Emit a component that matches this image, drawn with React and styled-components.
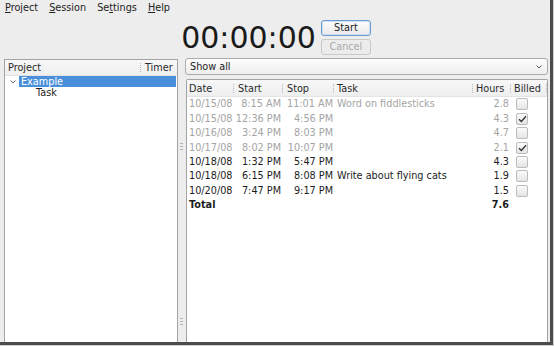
import React from 'react';
import styled, { createGlobalStyle } from 'styled-components';

const Global = createGlobalStyle`
  html, body { margin: 0; padding: 0; background: #d2d2d2; }
  body {
    font-family: "DejaVu Sans", "Liberation Sans", sans-serif;
    font-size: 9.7px;
    color: #1c1c1c;
  }
`;

const Window = styled.div`
  width: 550px;
  height: 342px;
  background: #ededed;
  border-right: 3px solid #4c4c4c;
  border-bottom: 3px solid #4c4c4c;
  display: flex;
  flex-direction: column;
  overflow: hidden;
`;

const MenuBar = styled.div`
  height: 16px;
  display: flex;
  align-items: center;
  padding-left: 5px;
  gap: 11px;
`;

const MenuItem = styled.span`
  line-height: 16px;
  color: #222;
  u { text-decoration: underline; text-underline-offset: 1px; }
`;

const TimerRow = styled.div`
  height: 42px;
  display: flex;
  justify-content: center;
  align-items: center;
  gap: 5px;
  padding-left: 2px;
`;

const TimerText = styled.div`
  font-size: 30px;
  line-height: 34px;
  color: #1a1a1a;
  padding-top: 1px;
`;

const ButtonStack = styled.div`
  display: flex;
  flex-direction: column;
  gap: 3px;
`;

const Button = styled.button`
  width: 50px;
  height: 16px;
  padding: 0;
  font-family: inherit;
  font-size: 9.7px;
  line-height: 14px;
  border-radius: 3px;
  border: 1px solid ${p => (p.$primary ? '#6b9bd3' : '#c9c9c9')};
  background: ${p => (p.disabled ? '#ececec' : 'linear-gradient(#fdfdfd, #e9e9e9)')};
  color: ${p => (p.disabled ? '#a9a9a9' : '#1c1c1c')};
  box-shadow: ${p => (p.$primary ? 'inset 0 0 0 1px #cfe0f4' : 'none')};
`;

const Main = styled.div`
  flex: 1;
  display: flex;
  padding-left: 4px;
  padding-right: 2px;
  min-height: 0;
`;

const LeftPanel = styled.div`
  width: 172px;
  margin-top: 1px;
  border: 1px solid #a3a3a3;
  border-bottom: none;
  background: #fff;
  display: flex;
  flex-direction: column;
`;

const PanelHeader = styled.div`
  height: 15px;
  display: flex;
  align-items: center;
  background: linear-gradient(#f8f8f8, #efefef);
  border-bottom: 1px solid #e2e2e2;
`;

const HeadCell = styled.div`
  height: 100%;
  display: flex;
  align-items: center;
  padding-left: ${p => p.$pad ?? 4}px;
  flex: ${p => (p.$grow ? 1 : 'none')};
  width: ${p => (p.$w ? `${p.$w}px` : 'auto')};
  box-sizing: border-box;
  color: #2a2a2a;
`;

const Grip = styled.span`
  width: 1px;
  height: 9px;
  background: repeating-linear-gradient(#b8b8b8 0 1px, transparent 1px 2px);
  align-self: center;
  flex: none;
`;

const TreeRow = styled.div`
  height: 11px;
  display: flex;
  align-items: center;
  padding-left: ${p => p.$indent}px;
`;

const Expander = styled.span`
  width: 9px;
  display: flex;
  align-items: center;
`;

const TreeLabel = styled.span`
  flex: ${p => (p.$selected ? 1 : 'none')};
  height: 11px;
  line-height: 11px;
  padding-left: 2px;
  margin-right: 1px;
  background: ${p => (p.$selected ? '#4a8fda' : 'transparent')};
  color: ${p => (p.$selected ? '#fff' : '#1c1c1c')};
`;

const Splitter = styled.div`
  width: 7px;
  display: flex;
  flex-direction: column;
  align-items: center;
  justify-content: space-between;
  padding: 85px 0 16px;
  box-sizing: border-box;
`;

const SplitGrip = styled.span`
  width: 3px;
  height: 8px;
  background: repeating-linear-gradient(#b4b4b4 0 1px, transparent 1px 3px);
`;

const RightPanel = styled.div`
  flex: 1;
  display: flex;
  flex-direction: column;
  gap: 4px;
  min-width: 0;
`;

const Combo = styled.div`
  height: 17px;
  box-sizing: border-box;
  border: 1px solid #ababab;
  border-radius: 3px;
  background: linear-gradient(#fdfdfd, #eeeeee);
  display: flex;
  align-items: center;
  justify-content: space-between;
  padding: 0 5px 0 4px;
  color: #222;
`;

const Table = styled.div`
  flex: 1;
  margin-left: 1px;
  border: 1px solid #a3a3a3;
  border-bottom: none;
  border-radius: 2px 2px 0 0;
  background: #fff;
  display: flex;
  flex-direction: column;
`;

const Cols = '46px 49px 51px 139px 38px 1fr';

const TableHead = styled.div`
  height: 16px;
  display: grid;
  grid-template-columns: ${Cols};
  background: linear-gradient(#f8f8f8, #eeeeee);
  border-bottom: 1px solid #e4e4e4;
`;

const sepLine = `
  content: '';
  position: absolute;
  top: 4px;
  width: 1px;
  height: 9px;
  background: repeating-linear-gradient(#b8b8b8 0 1px, transparent 1px 2px);
`;

const TH = styled.div`
  display: flex;
  align-items: center;
  padding-left: ${p => p.$pad}px;
  position: relative;
  color: #2a2a2a;
  ${p => p.$sep && `&::before { ${sepLine} left: 0; }`}
  ${p => p.$end && `&::after { ${sepLine} right: 0; }`}
`;

const Row = styled.div`
  height: 14.45px;
  display: grid;
  grid-template-columns: ${Cols};
  align-items: center;
  color: ${p => (p.$dim ? '#a4a4a4' : '#1c1c1c')};
  font-weight: ${p => (p.$bold ? 'bold' : 'normal')};
  white-space: nowrap;
`;

const Cell = styled.div`
  padding-left: ${p => p.$pl ?? 0}px;
  padding-right: ${p => p.$pr ?? 0}px;
  line-height: 14px;
  display: flex;
  justify-content: ${p => (p.$right ? 'flex-end' : 'flex-start')};
  align-items: center;
`;

const Check = styled.span`
  width: 12px;
  height: 12px;
  box-sizing: border-box;
  border: 1px solid #bcbcbc;
  border-radius: 2px;
  background: linear-gradient(#fbfbfb, #e4e4e4);
  display: flex;
  align-items: center;
  justify-content: center;
`;

const rows = [
  { d: '10/15/08', s: '8:15 AM', e: '11:01 AM', t: 'Word on fiddlesticks', h: '2.8', b: false, dim: true },
  { d: '10/15/08', s: '12:36 PM', e: '4:56 PM', t: '', h: '4.3', b: true, dim: true },
  { d: '10/16/08', s: '3:24 PM', e: '8:03 PM', t: '', h: '4.7', b: false, dim: true },
  { d: '10/17/08', s: '8:02 PM', e: '10:07 PM', t: '', h: '2.1', b: true, dim: true },
  { d: '10/18/08', s: '1:32 PM', e: '5:47 PM', t: '', h: '4.3', b: false },
  { d: '10/18/08', s: '6:15 PM', e: '8:08 PM', t: 'Write about flying cats', h: '1.9', b: false },
  { d: '10/20/08', s: '7:47 PM', e: '9:17 PM', t: '', h: '1.5', b: false },
];

const CheckMark = () => (
  <svg width="9" height="8" viewBox="0 0 9 8">
    <polyline points="1,4.2 3.4,6.5 8,1.2" fill="none" stroke="#333" strokeWidth="1.3" />
  </svg>
);

const Chevron = ({ color = '#555' }) => (
  <svg width="6" height="4" viewBox="0 0 6 4">
    <polyline points="0.5,0.5 3,3 5.5,0.5" fill="none" stroke={color} strokeWidth="1" />
  </svg>
);

export default function App() {
  return (
    <>
      <Global />
      <Window>
        <MenuBar>
          <MenuItem><u>P</u>roject</MenuItem>
          <MenuItem><u>S</u>ession</MenuItem>
          <MenuItem>Se<u>t</u>tings</MenuItem>
          <MenuItem><u>H</u>elp</MenuItem>
        </MenuBar>
        <TimerRow>
          <TimerText>00:00:00</TimerText>
          <ButtonStack>
            <Button $primary>Start</Button>
            <Button disabled>Cancel</Button>
          </ButtonStack>
        </TimerRow>
        <Main>
          <LeftPanel>
            <PanelHeader>
              <HeadCell $grow $pad={3}>Project</HeadCell>
              <Grip />
              <HeadCell $w={36} $pad={4}>Timer</HeadCell>
            </PanelHeader>
            <TreeRow $indent={5}>
              <Expander><Chevron color="#666" /></Expander>
              <TreeLabel $selected>Example</TreeLabel>
            </TreeRow>
            <TreeRow $indent={29}>
              <TreeLabel>Task</TreeLabel>
            </TreeRow>
          </LeftPanel>
          <Splitter>
            <SplitGrip />
            <SplitGrip />
          </Splitter>
          <RightPanel>
            <Combo>
              <span>Show all</span>
              <Chevron />
            </Combo>
            <Table>
              <TableHead>
                <TH $pad={2}>Date</TH>
                <TH $pad={5} $sep>Start</TH>
                <TH $pad={5} $sep>Stop</TH>
                <TH $pad={4} $sep>Task</TH>
                <TH $pad={4} $sep>Hours</TH>
                <TH $pad={4} $sep $end>Billed</TH>
              </TableHead>
              {rows.map((r, i) => (
                <Row key={i} $dim={r.dim}>
                  <Cell $pl={2}>{r.d}</Cell>
                  <Cell $right $pr={1}>{r.s}</Cell>
                  <Cell $right>{r.e}</Cell>
                  <Cell $pl={4}>{r.t}</Cell>
                  <Cell $right $pr={1}>{r.h}</Cell>
                  <Cell $pl={6}>
                    <Check>{r.b && <CheckMark />}</Check>
                  </Cell>
                </Row>
              ))}
              <Row $bold>
                <Cell $pl={2}>Total</Cell>
                <Cell />
                <Cell />
                <Cell />
                <Cell $right $pr={1}>7.6</Cell>
                <Cell />
              </Row>
            </Table>
          </RightPanel>
        </Main>
      </Window>
    </>
  );
}
